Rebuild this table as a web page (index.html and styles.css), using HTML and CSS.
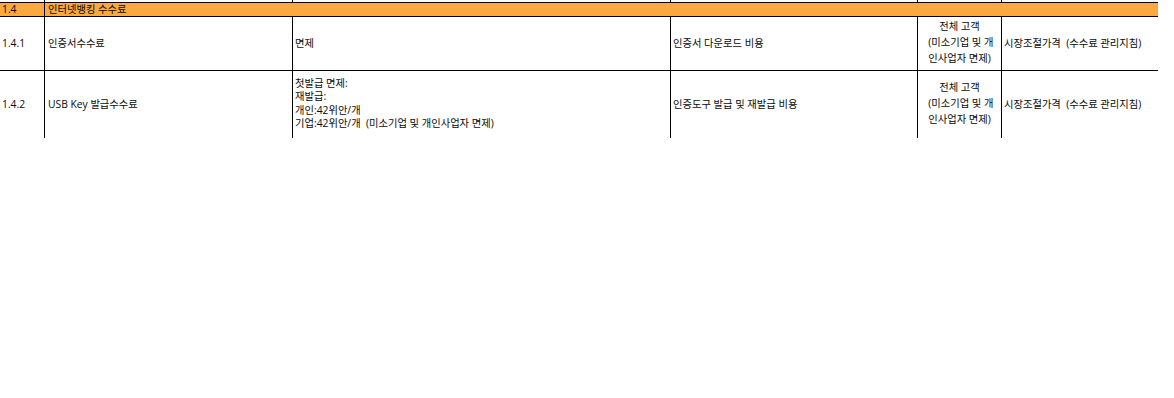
FILE: index.html
```html
<!DOCTYPE html>
<html lang="ko">
<head>
<meta charset="utf-8">
<link rel="stylesheet" href="styles.css">
</head>
<body>
<div class="sheet">
  <div class="row top">
    <div class="cell"></div><div class="cell"></div><div class="cell"></div><div class="cell"></div><div class="cell"></div><div class="cell last"></div>
  </div>
  <div class="row section">
    <div class="cell">1.4</div>
    <div class="cell span last">인터넷뱅킹 수수료</div>
  </div>
  <div class="row r1">
    <div class="cell">1.4.1</div>
    <div class="cell">인증서수수료</div>
    <div class="cell">면제</div>
    <div class="cell">인증서 다운로드 비용</div>
    <div class="cell center">전체 고객<br>&nbsp;(미소기업 및 개<br>인사업자 면제)</div>
    <div class="cell last">시장조절가격&nbsp; (수수료 관리지침)</div>
  </div>
  <div class="row r2">
    <div class="cell">1.4.2</div>
    <div class="cell">USB Key 발급수수료</div>
    <div class="cell multi">첫발급 면제:<br>재발급:<br>개인:42위안/개<br>기업:42위안/개&nbsp; (미소기업 및 개인사업자 면제)</div>
    <div class="cell">인증도구 발급 및 재발급 비용</div>
    <div class="cell center">전체 고객<br>&nbsp;(미소기업 및 개<br>인사업자 면제)</div>
    <div class="cell last">시장조절가격&nbsp; (수수료 관리지침)</div>
  </div>
</div>
</body>
</html>
```

FILE: styles.css
```css
html, body {
  margin: 0;
  padding: 0;
  background: #ffffff;
}
body {
  font-family: "Open Sans", "Noto Sans CJK KR", sans-serif;
  font-size: 10.3px;
  color: #0a0a0a;
}
.sheet {
  width: 1158px;
}
.row {
  display: grid;
  grid-template-columns: 45px 248px 378px 247px 84px 156px;
  box-sizing: border-box;
  border-bottom: 1px solid #000000;
}
.cell {
  box-sizing: border-box;
  border-right: 1px solid #000000;
  padding: 0 2px 0 2px;
  display: flex;
  align-items: center;
  white-space: nowrap;
  line-height: 13px;
}
.cell.last {
  border-right: none;
}
.top {
  height: 3px;
}
.section {
  height: 14px;
  background: #f9a940;
}
.section .cell {
  line-height: 12px;
  padding-bottom: 1px;
}
.section .span {
  grid-column: 2 / 7;
  padding-left: 3px;
}
.r1 {
  height: 54px;
}
.r2 {
  height: 67px;
  border-bottom: none;
}
.r1 .cell:nth-child(2),
.r2 .cell:nth-child(2) {
  padding-left: 3px;
}
.multi {
  line-height: 13.5px;
  padding-bottom: 2px;
}
.center {
  justify-content: center;
  text-align: center;
  line-height: 16px;
  padding: 0 0 4px 0;
}
```
